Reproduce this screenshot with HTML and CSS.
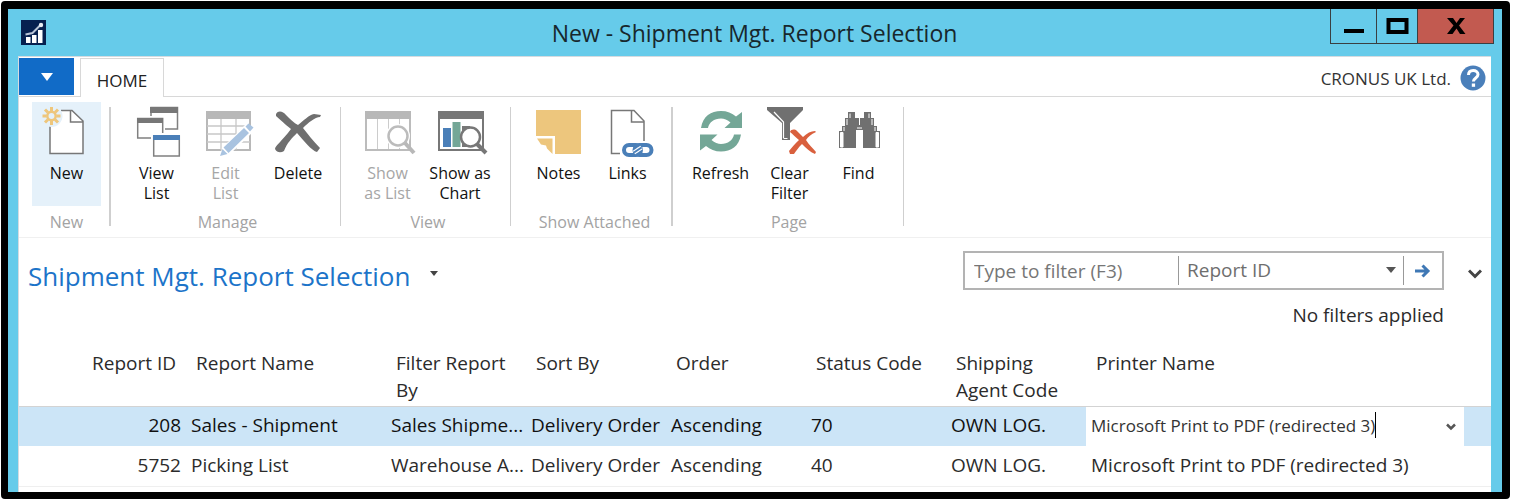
FILE: index.html
```html
<!DOCTYPE html>
<html lang="en">
<head>
<meta charset="utf-8">
<title>New - Shipment Mgt. Report Selection</title>
<link rel="stylesheet" href="styles.css">
</head>
<body>
<div class="window">
  <header class="titlebar">
    <svg class="app-icon" viewBox="0 0 25 25" aria-hidden="true">
      <rect width="25" height="25" fill="#06204f"/>
      <path d="M5 17h4.500v6H5zM11 15h4.500v8H11zM17 10h4.500v13H17z" fill="#fff"/>
      <path d="M4.500 14.500l7-1.500 8-8" fill="none" stroke="#b9c4d6" stroke-width="2"/>
      <circle cx="20" cy="5" r="2.200" fill="#e8ecf2"/>
    </svg>
    <div class="caption">New - Shipment Mgt. Report Selection</div>
    <div class="controls">
      <button class="control" aria-label="Minimize"><svg viewBox="0 0 24 20"><rect x="2" y="13" width="20" height="4"/></svg></button>
      <button class="control control-max" aria-label="Maximize"><svg viewBox="0 0 24 20"><path d="M3.500 4h18v12h-18z" fill="none" stroke="#000" stroke-width="4"/></svg></button>
      <button class="control control-close" aria-label="Close"><svg viewBox="0 0 24 20"><path d="M3 2h6l3.500 5L16 2h5l-6 7.500L21.500 18H16l-3.500-5.500L8.500 18H3l6.500-8.500z"/></svg></button>
    </div>
  </header>
  <main class="client">
    <nav class="tabs">
      <button class="file-tab" aria-label="Application menu"><svg viewBox="0 0 12 8"><path d="M0 0h12L6 8z" fill="#fff"/></svg></button>
      <button class="tab">HOME</button>
      <div class="company">CRONUS UK Ltd.</div>
      <button class="help" aria-label="Help"><svg viewBox="0 0 26 26"><circle cx="13" cy="13" r="12.500" fill="#4a7fba"/><path d="M8.500 10c0-3 2-4.500 4.700-4.500S18 7 18 9.600c0 3.400-4.600 3.400-4.600 7" fill="none" stroke="#fff" stroke-width="3"/><rect x="11.800" y="18.500" width="3.300" height="3.300" fill="#fff"/></svg></button>
    </nav>
    <section class="ribbon">
      <div class="group group-new">
        <div class="actions">
          <button class="action action-hot">
            <svg viewBox="0 0 56 57"><path d="M11 20V10l8-5.500h14L44 15v32.500H11z" fill="#fff"/><path d="M11 20v27.500h33V15L33 4.500H22M31.500 4.500v11.500H44" fill="none" stroke="#777" stroke-width="1.500"/><circle cx="12.500" cy="10" r="11" fill="#e5f1fa"/><g stroke="#eec67c" fill="none"><circle cx="12.500" cy="10" r="4.200" stroke-width="2.500"/><path stroke-width="3" d="M12.500 1v4M12.500 15v4M3.500 10h4M17.500 10h4M6 3.500l3 3M16 13.500l3 3M19 3.500l-3 3M9 13.500l-3 3"/></g></svg>
            <span>New</span>
          </button>
        </div>
        <div class="group-name">New</div>
      </div>
      <div class="group group-manage">
        <div class="actions">
          <button class="action">
            <svg viewBox="0 0 56 57"><path d="M22 1.500h26.500V23H22z" fill="#fff" stroke="#808080" stroke-width="1.500"/><path d="M21 1h28v6H21z" fill="#777"/><path d="M6 10h30v24H6z" fill="#fff"/><path d="M8.700 12.500h25V32h-25z" fill="#fff" stroke="#808080" stroke-width="1.500"/><path d="M8 12h26v5H8z" fill="#777"/><path d="M22 27h31v25H22z" fill="#fff"/><path d="M24.700 30h25.600v20H24.700z" fill="#fff" stroke="#808080" stroke-width="1.500"/><path d="M24 29h27v5H24z" fill="#4a7fb8"/></svg>
            <span>View<br>List</span>
          </button>
          <button class="action" disabled>
            <svg viewBox="0 0 56 57"><path d="M9 6h43v38H9z" fill="#fff" stroke="#b8b8b8" stroke-width="2"/><path d="M8 5h45v8H8z" fill="#b8b8b8"/><path d="M9 20h43M9 28h43M9 36h43M23 13v31M38 13v31" stroke="#c8c8c8" stroke-width="1.300"/><path d="M22 51l2-9 25-25 8 7-26 25z" fill="#fff"/><path d="M22 50l2.500-7 5 5zM25.500 41.500L46 22l5 5-20.500 20zM47.500 20.500l3-3 5 4-3.500 4z" fill="#a9c3e0"/></svg>
            <span>Edit<br>List</span>
          </button>
          <button class="action action-wide">
            <svg viewBox="0 0 56 57"><path fill="#6f6f6f" d="M6 8c2-4 7-3 10 1 4 4 8 8 12 10 5-4 11-10 16-11l7 1-1 2c-5 0-12 6-17 11 5 6 10 13 17 20l-3 4c-5-1-14-12-20-19-5 5-10 10-13 18-3 2-7 2-9-2 0-3 7-8 16-20C17 20 13 16 6 10z"/></svg>
            <span>Delete</span>
          </button>
        </div>
        <div class="group-name">Manage</div>
      </div>
      <div class="group group-view">
        <div class="actions">
          <button class="action" disabled>
            <svg viewBox="0 0 56 57"><path d="M6 6h44v38H6z" fill="#fff" stroke="#bcbcbc" stroke-width="2"/><path d="M5 5h46v8H5z" fill="#b8b8b8"/><path d="M17.500 13v30M28.500 13v30M39.500 13v30" stroke="#ccc"/><circle cx="38" cy="30" r="12" fill="#fff"/><circle cx="38" cy="30" r="9.500" fill="#fff" stroke="#bcbcbc" stroke-width="2.500"/><path d="M45 37l9 10" stroke="#b8b8b8" stroke-width="4"/></svg>
            <span>Show<br>as List</span>
          </button>
          <button class="action action-wide">
            <svg viewBox="0 0 56 57"><path d="M7 6h44v38H7z" fill="#fff" stroke="#777" stroke-width="2"/><path d="M6 5h46v8H6z" fill="#777"/><path d="M11 22h8v19h-8z" fill="#4a7fb8"/><path d="M20.500 16h8v25h-8z" fill="#74a797"/><path d="M30 20h8v21h-8z" fill="#777"/><circle cx="38.500" cy="31" r="9.500" fill="#fff" stroke="#777" stroke-width="2.500"/><path d="M45 38l9 9" stroke="#777" stroke-width="4"/></svg>
            <span>Show as<br>Chart</span>
          </button>
        </div>
        <div class="group-name">View</div>
      </div>
      <div class="group group-attached">
        <div class="actions">
          <button class="action">
            <svg viewBox="0 0 56 57"><path d="M5 4h45v44H24V30H5z" fill="#edc67d"/><path d="M6 32.500h15.500V48L16 42.500l-1-3-5-1z" fill="#edc67d"/></svg>
            <span>Notes</span>
          </button>
          <button class="action">
            <svg viewBox="0 0 56 57"><path d="M20 47.500h-8.500v-43H34L44 15v20" fill="none" stroke="#777" stroke-width="1.500"/><path d="M31.500 4.500V16H44" fill="none" stroke="#777" stroke-width="1.500"/><g fill="none" stroke="#4a7fb8" stroke-width="4"><rect x="24" y="39" width="17" height="10" rx="5"/><rect x="34.500" y="39" width="17" height="10" rx="5"/></g><path d="M34 46.500l7.500-5" stroke="#fff" stroke-width="4"/><path d="M34 46.500l7.500-5" stroke="#4a7fb8" stroke-width="2"/></svg>
            <span>Links</span>
          </button>
        </div>
        <div class="group-name">Show Attached</div>
      </div>
      <div class="group group-page">
        <div class="actions">
          <button class="action">
            <svg viewBox="0 0 56 57"><g fill="#74a797"><path id="arc" d="M8 22C10 10 18 5 28 5c6 0 11 2 15 5.500L49 6v16H31.500l6-5.500C34.500 14 31 12.500 28 12.500c-7 0-12 4-13 9.500z"/><use href="#arc" transform="rotate(180 28 25.300)"/></g></svg>
            <span>Refresh</span>
          </button>
          <button class="action">
            <svg viewBox="0 0 56 57"><path d="M5 1h36v3L28 17v17h-8V17L5 4z" fill="#707070"/><path d="M12 6l9.500 10v16" fill="none" stroke="#fff" stroke-width="1.200"/><path d="M21.500 32.500h4" stroke="#fff"/><path fill="#d9603e" d="M28 26c1-3 5-3 7-1l6 6c4-4 8-6 12-6l1 1c-5 2-8 5-10 8 3 5 7 8 10 12l-1 2c-5-2-9-6-13-10-4 4-6 7-8 10h-4l-1-3c3-4 6-7 10-11-4-3-6-6-9-8z"/></svg>
            <span>Clear<br>Filter</span>
          </button>
          <button class="action">
            <svg viewBox="0 0 56 57"><path d="M8 42V25h3v-5h3v-8h3V6h7v6h4v7h1v-7h4V6h7v6h3v8h3v5h3v17H32V24h-7v18z" fill="#707070"/><path d="M9.500 41V26.500h2.500V41zM47.500 41V26.500H45V41zM13 25v-4M16 19v-6M19 12V7.500M44 25v-4M41 19v-6M38 12V7.500M26 22h5" fill="#fff" stroke="#fff" stroke-width="1"/></svg>
            <span>Find</span>
          </button>
        </div>
        <div class="group-name">Page</div>
      </div>
    </section>
    <section class="page-head">
      <h1 class="page-title">Shipment Mgt. Report Selection</h1>
      <button class="title-menu" aria-label="Page menu"><svg viewBox="0 0 8 5"><path d="M0 0h8L4 5z" fill="#444"/></svg></button>
      <form class="filter">
        <input class="filter-text" type="text" placeholder="Type to filter (F3)" aria-label="Filter text">
        <div class="filter-field">
          <select class="filter-select" aria-label="Filter column"><option>Report ID</option></select>
          <svg class="filter-arrow" viewBox="0 0 10 6"><path d="M0 0h10L5 6z" fill="#555"/></svg>
        </div>
        <button class="filter-go" type="button" aria-label="Apply filter"><svg viewBox="0 0 16 14"><path d="M0 7h13M7.500 1.500L13 7l-5.500 5.500" fill="none" stroke="#3f78b5" stroke-width="3"/></svg></button>
      </form>
      <button class="expand" aria-label="Expand filter pane"><svg viewBox="0 0 14 10"><path d="M1 1.500l6 6 6-6" fill="none" stroke="#444" stroke-width="3"/></svg></button>
    </section>
    <p class="filter-status">No filters applied</p>
    <table class="grid">
      <colgroup><col class="c-id"><col class="c-name"><col class="c-std"><col class="c-std"><col class="c-std"><col class="c-std"><col class="c-std"><col><col class="c-end"></colgroup>
      <thead>
        <tr><th class="num">Report ID</th><th>Report Name</th><th>Filter Report By</th><th>Sort By</th><th>Order</th><th>Status Code</th><th>Shipping Agent Code</th><th>Printer Name</th><th></th></tr>
      </thead>
      <tbody>
        <tr class="selected"><td class="num">208</td><td>Sales - Shipment</td><td>Sales Shipme...</td><td>Delivery Order</td><td>Ascending</td><td>70</td><td>OWN LOG.</td>
          <td class="editing"><div class="editor"><input class="editor-input" type="text" value="Microsoft Print to PDF (redirected 3)" aria-label="Printer Name"><span class="caret"></span><button class="editor-drop" aria-label="Choose printer"><svg viewBox="0 0 10 8"><path d="M1 1.500l4 4 4-4" fill="none" stroke="#555" stroke-width="2.500"/></svg></button></div></td><td></td></tr>
        <tr><td class="num">5752</td><td>Picking List</td><td>Warehouse A...</td><td>Delivery Order</td><td>Ascending</td><td>40</td><td>OWN LOG.</td><td>Microsoft Print to PDF (redirected 3)</td><td></td></tr>
      </tbody>
    </table>
  </main>
</div>
</body>
</html>
```
FILE: styles.css
```css
* { box-sizing: border-box; }
body {
  margin: 0;
  padding: 1px 3px 2px 1px;
  min-height: 100vh;
  display: flex;
  background: #fff;
  color: #2b2b2b;
  font-family: "Open Sans", "Noto Sans", sans-serif;
  font-size: 19px;
}
button, input, select { font: inherit; color: inherit; margin: 0; padding: 0; border: 0; background: none; border-radius: 0; outline: 0; }
svg { display: block; }
.window { flex: 1; min-width: 0; display: flex; flex-direction: column; border: 7px solid #000; border-top-width: 8px; border-right-width: 8px; border-radius: 4px; background: #66cbea; padding: 0 11px 0 10px; }
.window > * { flex-shrink: 0; }

.titlebar { display: grid; grid-template-columns: 1fr auto 1fr; align-items: center; height: 47px; }
.app-icon { width: 25px; height: 25px; margin-left: 3px; }
.caption { font-size: 23px; line-height: 32px; color: #17272d; white-space: nowrap; }
.controls { display: flex; justify-self: end; align-self: start; height: 35px; margin-right: -3px; border: 1px solid #3a3f41; border-top-width: 0; }
.control { width: 45px; display: grid; place-items: center; }
.control svg { width: 24px; height: 20px; }
.control-max { width: 42px; border: solid #3a3f41; border-width: 0 1px; }
.control-close { width: 75px; background: #c25a50; }

.client { flex: 1 0 auto; background: #fff; border: 1px solid #d5dbe0; border-width: 1px 0 0 1px; }
.tabs { display: flex; height: 40px; border-bottom: 1px solid #d8d8d8; }
.file-tab { width: 55px; height: 37px; margin: 1px 6px 0 0; background: #116bc7; display: grid; place-items: center; }
.file-tab svg { width: 12px; height: 8px; }
.tab { width: 84px; height: 39px; margin-top: 1px; padding-top: 4px; border: 1px solid #d8d8d8; border-bottom: 0; background: #fff; font-size: 17px; color: #222; }
.company { margin-left: auto; font-size: 17px; line-height: 43px; color: #333; }
.help { width: 26px; margin: 0 5px 0 9px; padding-top: 2px; }
.help svg { width: 26px; height: 26px; }

.ribbon { display: flex; height: 141px; padding: 5px 0 0 1px; border-bottom: 1px solid #f0f0f0; }
.group { position: relative; padding-right: 2px; }
.group::after { content: ""; position: absolute; right: 0; top: 5px; height: 119px; width: 1px; background: #cfcfcf; }
.actions { display: flex; height: 104px; }
.action { width: 69px; padding-top: 4px; display: flex; flex-direction: column; align-items: center; color: #111; font-size: 16px; line-height: 20px; }
.action-wide { width: 76px; }
.action svg { width: 56px; height: 57px; flex: none; }
.action:disabled { color: #a6a6a6; }
.action-hot { background: #e5f1fa; }
.group-name { text-align: center; font-size: 16px; line-height: 20px; padding-top: 6px; color: #a3a3a3; }
.group-new { width: 91px; padding-left: 12px; padding-right: 10px; }
.group-new::after, .group-attached::after { width: 2px; }
.group-manage { width: 230px; padding-left: 11px; }
.group-manage .group-name { padding-right: 6px; }
.group-view { width: 170px; padding-left: 12px; }
.group-view .group-name { padding-right: 6px; }
.group-attached { width: 162px; padding-left: 13px; }
.group-attached .group-name { padding-right: 6px; }
.group-page { width: 231px; padding-left: 13px; }
.group-page .group-name { padding-right: 10px; }

.page-head { display: flex; align-items: flex-start; padding: 13px 9px 0 9px; }
.page-title { margin: 0; font-size: 26px; line-height: 50px; font-weight: 400; color: #1c74c9; white-space: nowrap; }
.title-menu { margin: 20px 0 0 20px; }
.title-menu svg { width: 8px; height: 5px; }
.filter { margin-left: auto; display: flex; align-items: center; width: 481px; height: 39px; border: 2px solid #b3b3b3; color: #6e6e6e; }
.filter-text { flex: 1; min-width: 0; padding-left: 9px; }
.filter-text::placeholder { color: #767676; opacity: 1; }
.filter-field { position: relative; width: 226px; height: 29px; border: 1px solid #999; border-width: 0 1px; }
.filter-select { appearance: none; width: 100%; height: 28px; padding-left: 8px; }
.filter-arrow { position: absolute; right: 7px; top: 11px; width: 10px; height: 6px; pointer-events: none; }
.filter-go { width: 38px; display: grid; place-items: center; }
.filter-go svg { width: 16px; height: 14px; }
.expand { margin: 18px 0 0 24px; }
.expand svg { width: 14px; height: 10px; }
.filter-status { margin: 0 47px 0 0; text-align: right; line-height: 28px; }

.grid { width: 100%; margin-top: 21px; table-layout: fixed; border-collapse: collapse; }
.c-id { width: 167px; }
.c-name { width: 200px; }
.c-std { width: 140px; }
.c-end { width: 27px; }
.grid th { padding: 0 10px; height: 56px; font-weight: 400; text-align: left; vertical-align: top; line-height: 27px; border-bottom: 1px solid #d3d3d3; }
.grid td { padding: 0 0 2px 5px; height: 40px; white-space: nowrap; border-bottom: 1px solid #efefef; }
.grid .num { text-align: right; padding-right: 5px; }
.grid th.num { padding-right: 10px; }
.grid .selected td { background: #cce5f7; color: #111; border-bottom: 0; }
.grid .selected .editing { background: #fff; }
.editor { display: flex; align-items: center; font-size: 17px; }
.editor-input { field-sizing: content; color: #333; }
.caret { width: 1px; height: 26px; background: #000; }
.editor-drop { margin: 4px 8px 0 auto; }
.editor-drop svg { width: 10px; height: 8px; }
```
